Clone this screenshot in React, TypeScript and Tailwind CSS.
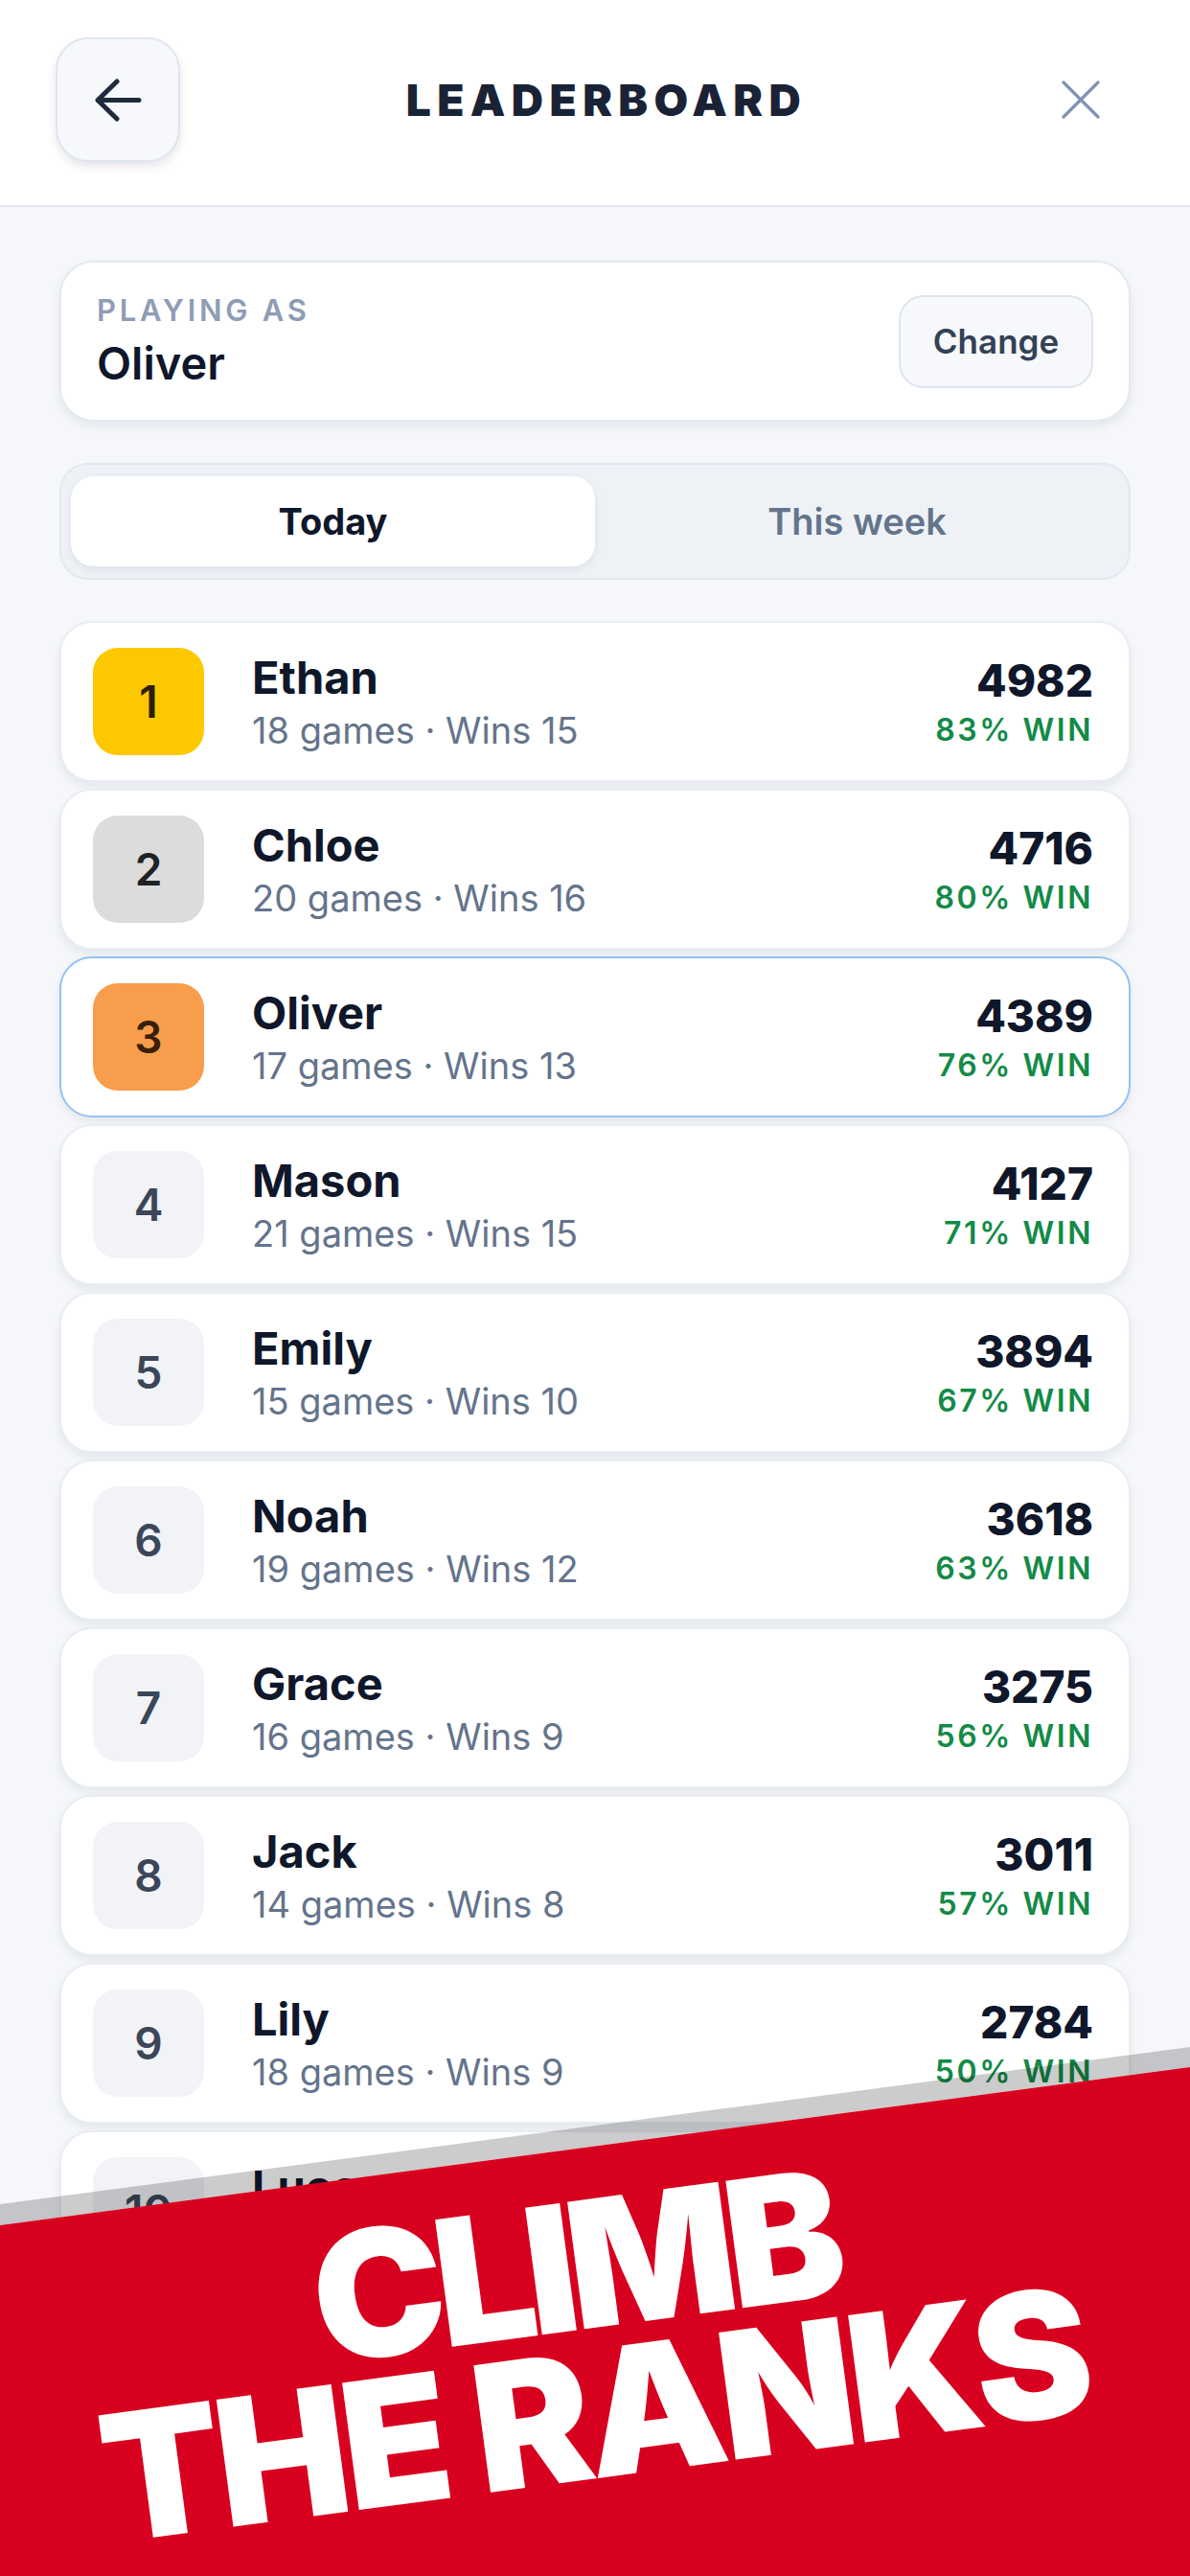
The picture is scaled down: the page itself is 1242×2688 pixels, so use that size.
import React from "react";

interface Player {
  rank: number;
  name: string;
  games: number;
  wins: number;
  score: number;
  winRate: number;
}

const PLAYERS: Player[] = [
  { rank: 1, name: "Ethan", games: 18, wins: 15, score: 4982, winRate: 83 },
  { rank: 2, name: "Chloe", games: 20, wins: 16, score: 4716, winRate: 80 },
  { rank: 3, name: "Oliver", games: 17, wins: 13, score: 4389, winRate: 76 },
  { rank: 4, name: "Mason", games: 21, wins: 15, score: 4127, winRate: 71 },
  { rank: 5, name: "Emily", games: 15, wins: 10, score: 3894, winRate: 67 },
  { rank: 6, name: "Noah", games: 19, wins: 12, score: 3618, winRate: 63 },
  { rank: 7, name: "Grace", games: 16, wins: 9, score: 3275, winRate: 56 },
  { rank: 8, name: "Jack", games: 14, wins: 8, score: 3011, winRate: 57 },
  { rank: 9, name: "Lily", games: 18, wins: 9, score: 2784, winRate: 50 },
  { rank: 10, name: "Lucas", games: 17, wins: 8, score: 2531, winRate: 47 },
];

const CURRENT_PLAYER = "Oliver";

function badgeClass(rank: number) {
  if (rank === 1) return "bg-[#fcc800] text-[#2a2108]";
  if (rank === 2) return "bg-[#dcdcdc] text-[#222222]";
  if (rank === 3) return "bg-[#f89d4c] text-[#3a1f08]";
  return "bg-[#f1f3f7] text-[#3b4658]";
}

function ArrowLeftIcon() {
  return (
    <svg width="50" height="45" viewBox="0 0 50 45" fill="none">
      <path
        d="M47 22.5H4M24 3L4 22.5L24 42"
        stroke="#1f2a3d"
        strokeWidth="5"
        strokeLinecap="round"
        strokeLinejoin="round"
      />
    </svg>
  );
}

function CloseIcon() {
  return (
    <svg width="40" height="40" viewBox="0 0 40 40" fill="none">
      <path
        d="M2 2L38 38M38 2L2 38"
        stroke="#8093b4"
        strokeWidth="3.2"
        strokeLinecap="round"
      />
    </svg>
  );
}

function PlayerRow({ player }: { player: Player }) {
  const isMe = player.name === CURRENT_PLAYER;

  return (
    <div
      className={`flex h-[168px] items-center rounded-[34px] bg-white pl-[33px] pr-[37px] shadow-[0_5px_10px_rgba(15,23,42,0.07)] ${
        isMe ? "border-2 border-[#93c2f4]" : "border-2 border-[#e9edf3]"
      }`}
    >
      <div
        className={`flex h-[112px] w-[116px] shrink-0 items-center justify-center rounded-[26px] text-[46px] font-semibold ${badgeClass(
          player.rank,
        )}`}
      >
        {player.rank}
      </div>
      <div className="ml-[50px] flex-1">
        <p className="text-[47px] font-bold leading-[54px] text-[#0f172a]">{player.name}</p>
        <p className="mt-[5px] text-[38px] leading-[46px] text-[#64748b]">
          {player.games} games · Wins {player.wins}
        </p>
      </div>
      <div className="text-right">
        <p className="text-[46px] font-extrabold leading-[54px] text-[#0f172a]">{player.score}</p>
        <p className="mt-[6px] text-[32px] font-semibold leading-[38px] tracking-[0.08em] text-[#138a47]">
          {player.winRate}% WIN
        </p>
      </div>
    </div>
  );
}

export default function App() {
  return (
    <div
      className="relative h-[2688px] w-[1242px] overflow-hidden bg-[#f5f7fa]"
      style={{ fontFamily: "Inter, 'Noto Sans', sans-serif" }}
    >
      <header className="flex h-[216px] items-center border-b-2 border-[#e1e7ef] bg-white px-[58px] pb-[6px]">
        <button className="flex h-[130px] w-[130px] items-center justify-center rounded-[34px] border-2 border-[#dfe5ef] bg-[#f6f8fb] shadow-[0_5px_10px_rgba(15,23,42,0.1)]">
          <ArrowLeftIcon />
        </button>
        <h1 className="flex-1 pl-[24px] text-center text-[46px] font-black tracking-[0.14em] text-[#1a2335]">
          LEADERBOARD
        </h1>
        <div className="flex w-[130px] justify-end pr-[36px]">
          <CloseIcon />
        </div>
      </header>

      <main className="px-[62px] pt-[56px]">
        <section className="flex items-center justify-between rounded-[36px] border-2 border-[#e4e9f0] bg-white py-[32px] pl-[37px] pr-[37px] shadow-[0_5px_12px_rgba(15,23,42,0.07)]">
          <div>
            <p className="text-[31px] font-semibold leading-[36px] tracking-[0.12em] text-[#8e9db5]">
              PLAYING AS
            </p>
            <p className="mt-[10px] text-[47px] font-semibold leading-[54px] text-[#0f172a]">Oliver</p>
          </div>
          <button className="flex h-[97px] w-[203px] items-center justify-center rounded-[26px] border-2 border-[#dfe5ee] bg-[#f6f8fb] text-[35px] font-semibold text-[#334155]">
            Change
          </button>
        </section>

        <div className="mt-[43px] grid grid-cols-2 rounded-[30px] border-2 border-[#e2e8f0] bg-[#eef2f7] px-[10px] py-[12px]">
          <button className="flex h-[94px] items-center justify-center rounded-[24px] bg-white text-[38px] font-bold text-[#0f172a] shadow-[0_3px_8px_rgba(15,23,42,0.08)]">
            Today
          </button>
          <button className="flex h-[94px] items-center justify-center text-[38px] font-semibold text-[#64748b]">
            This week
          </button>
        </div>

        <div className="mt-[43px] flex flex-col gap-[7px]">
          {PLAYERS.map((player) => (
            <PlayerRow key={player.rank} player={player} />
          ))}
        </div>
      </main>

      <div className="absolute inset-x-0 bottom-0 top-[2100px]">
        <div className="absolute inset-0 bg-black/20 [clip-path:polygon(0_200px,100%_36px,100%_57px,0_222px)]" />
        <div className="absolute inset-0 bg-[#d8001f] [clip-path:polygon(0_222px,100%_57px,100%_100%,0_100%)]" />
        <div className="absolute inset-x-0 top-[184px] flex -rotate-[7.6deg] flex-col items-center pr-[24px] text-[184px] font-black leading-[156px] text-white">
          <span className="tracking-[-0.05em]">CLIMB</span>
          <span className="tracking-[-0.03em]">THE RANKS</span>
        </div>
      </div>
    </div>
  );
}
